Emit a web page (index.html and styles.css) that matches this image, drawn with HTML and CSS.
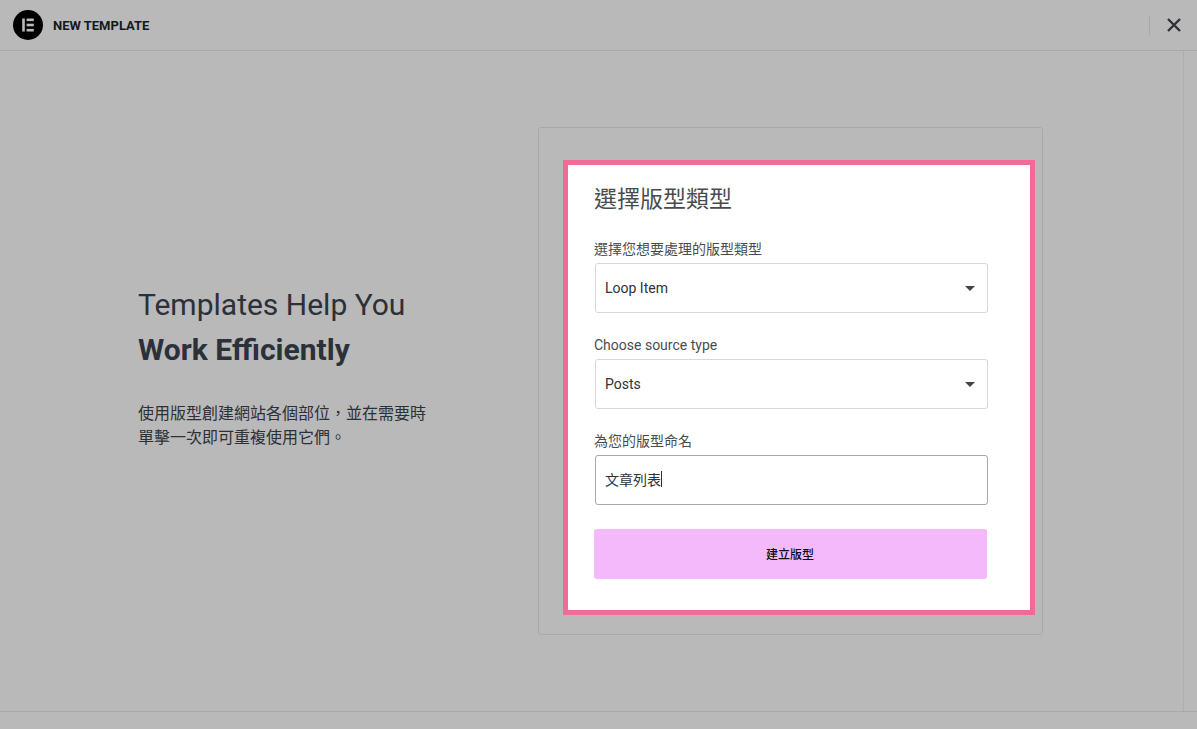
FILE: index.html
```html
<!DOCTYPE html>
<html lang="zh-Hant">
<head>
    <meta charset="UTF-8">
    <meta name="viewport" content="width=device-width, initial-scale=1.0">
    <title>New Template</title>
    <link rel="stylesheet" href="styles.css">
</head>
<body>
    <header class="top-bar">
        <div class="brand">
            <svg class="logo" viewBox="0 0 30 30" width="30" height="30">
                <circle cx="15" cy="15" r="15" fill="#000"></circle>
                <rect x="9.2" y="8.5" width="2.6" height="13" fill="#b9b9b9"></rect>
                <rect x="13.6" y="8.5" width="7.2" height="2.6" fill="#b9b9b9"></rect>
                <rect x="13.6" y="13.7" width="7.2" height="2.6" fill="#b9b9b9"></rect>
                <rect x="13.6" y="18.9" width="7.2" height="2.6" fill="#b9b9b9"></rect>
            </svg>
            <span class="brand-title">NEW TEMPLATE</span>
        </div>
        <div class="top-actions">
            <span class="top-divider"></span>
            <svg class="close-icon" viewBox="0 0 14 14" width="14" height="14">
                <path d="M1 1 L13 13 M13 1 L1 13" stroke="#2f3238" stroke-width="2.4" fill="none"></path>
            </svg>
        </div>
    </header>

    <main class="content">
        <section class="intro">
            <h1 class="intro-title">Templates Help You <strong>Work Efficiently</strong></h1>
            <p class="intro-text">使用版型創建網站各個部位，並在需要時<br>單擊一次即可重複使用它們。</p>
        </section>

        <section class="form-card">
            <form class="form-box">
                <h2 class="form-title">選擇版型類型</h2>

                <label class="field-label">選擇您想要處理的版型類型</label>
                <div class="select-box">
                    <span>Loop Item</span>
                    <span class="caret"></span>
                </div>

                <label class="field-label">Choose source type</label>
                <div class="select-box">
                    <span>Posts</span>
                    <span class="caret"></span>
                </div>

                <label class="field-label">為您的版型命名</label>
                <div class="select-box name-input">
                    <span>文章列表</span><span class="text-cursor"></span>
                </div>

                <button type="button" class="submit-btn">建立版型</button>
            </form>
        </section>

        <div class="scroll-track"></div>
    </main>

    <footer class="bottom-bar"></footer>
</body>
</html>
```

FILE: styles.css
```css
html,
body {
    height: 100%;
}

body {
    margin: 0;
    background-color: #b9b9b9;
    color: #2c3038;
    font-family: Roboto, "Noto Sans CJK TC", sans-serif;
    display: flex;
    flex-direction: column;
    height: 729px;
    overflow: hidden;
}

.top-bar {
    height: 50px;
    flex: none;
    display: flex;
    justify-content: space-between;
    align-items: center;
    padding: 0 16px 0 13px;
    border-bottom: 1px solid #a9a9a9;
}

.brand {
    display: flex;
    align-items: center;
    gap: 10px;
}

.brand-title {
    font-size: 13px;
    font-weight: 700;
    color: #17181a;
}

.top-actions {
    display: flex;
    align-items: center;
    gap: 17px;
}

.top-divider {
    width: 1px;
    height: 20px;
    background-color: #a9a9a9;
}

.close-icon {
    display: block;
}

.content {
    flex: 1;
    display: flex;
    position: relative;
}

.intro {
    width: 400px;
    margin-left: 138px;
    padding-top: 231px;
}

.intro-title {
    margin: 0;
    font-size: 30px;
    font-weight: 400;
    line-height: 45px;
}

.intro-title strong {
    display: block;
    font-weight: 700;
}

.intro-text {
    margin: 30px 0 0;
    font-size: 16px;
    line-height: 24px;
}

.form-card {
    box-sizing: border-box;
    width: 505px;
    height: 508px;
    margin-top: 76px;
    padding: 32px 7px 19px 24px;
    border: 1px solid #a9a9a9;
    border-radius: 3px;
}

.form-box {
    box-sizing: border-box;
    height: 455px;
    padding: 19px 42px 0 26px;
    background-color: #fff;
    border: 5px solid #f06c96;
}

.form-title {
    margin: 0 0 23px;
    font-size: 23px;
    font-weight: 400;
    line-height: 32px;
    color: #494c4f;
}

.field-label {
    display: block;
    font-size: 14px;
    line-height: 20px;
    color: #494c4f;
    margin-bottom: 4px;
}

.select-box {
    box-sizing: border-box;
    height: 50px;
    width: 393px;
    margin: 0 0 22px 1px;
    padding: 0 9px;
    display: flex;
    align-items: center;
    justify-content: space-between;
    font-size: 14px;
    color: #2f3238;
    border: 1px solid #d5d8dc;
    border-radius: 3px;
}

.caret {
    width: 0;
    height: 0;
    margin-right: 3px;
    border-left: 5px solid transparent;
    border-right: 5px solid transparent;
    border-top: 5px solid #3f444b;
}

.name-input {
    justify-content: flex-start;
    margin-bottom: 24px;
    padding-bottom: 2px;
    border-color: #a8a8a8;
}

.text-cursor {
    width: 1px;
    height: 16px;
    background-color: #2f3238;
}

.submit-btn {
    display: block;
    width: 393px;
    height: 50px;
    padding: 0 1px 1px 0;
    border: none;
    border-radius: 3px;
    background-color: #f3b9fb;
    color: #0c0d0e;
    font-family: inherit;
    font-size: 12px;
    font-weight: 500;
}

.scroll-track {
    position: absolute;
    top: 0;
    bottom: 0;
    right: 13px;
    width: 1px;
    background-color: #aeaeae;
}

.bottom-bar {
    height: 17px;
    flex: none;
    border-top: 1px solid #a9a9a9;
}
```
